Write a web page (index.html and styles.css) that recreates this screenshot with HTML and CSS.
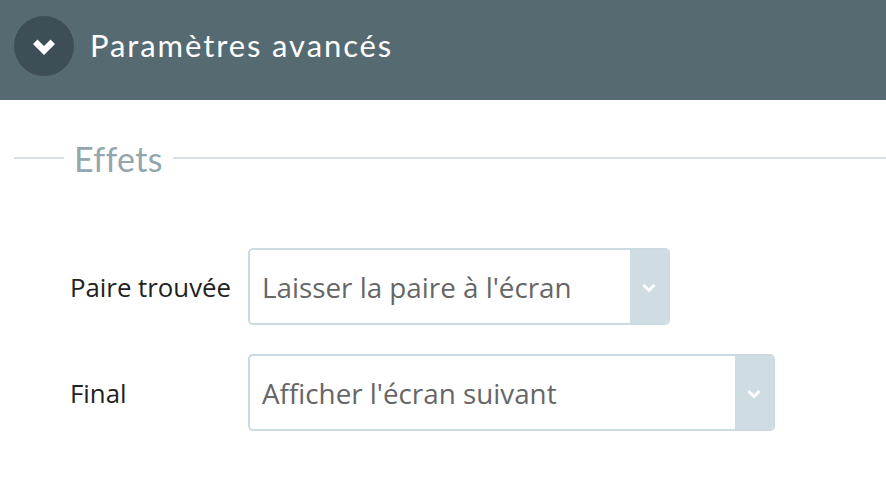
FILE: index.html
```html
<!DOCTYPE html>
<html lang="fr">
<head>
<meta charset="utf-8">
<link rel="stylesheet" href="styles.css">
</head>
<body>
<div class="header">
  <span class="toggle">
    <svg width="24" height="20" viewBox="0 0 24 20"><path d="M1 7 L5.5 2.5 L12 9 L18.5 2.5 L23 7 L12 18 Z" fill="#fff"/></svg>
  </span>
  <span class="title">Paramètres avancés</span>
</div>
<div class="section">
  <div class="legend"><span class="legend-text">Effets</span></div>
  <div class="rows">
    <div class="row">
      <label class="label">Paire trouvée</label>
      <div class="select select-short">
        <span class="value">Laisser la paire à l'écran</span>
        <span class="arrow"><svg class="chev" viewBox="0 0 14 10"><path d="M1.5 2 L7 7.5 L12.5 2" fill="none" stroke="#fff" stroke-width="3"/></svg></span>
      </div>
    </div>
    <div class="row">
      <label class="label">Final</label>
      <div class="select select-long">
        <span class="value">Afficher l'écran suivant</span>
        <span class="arrow"><svg class="chev" viewBox="0 0 14 10"><path d="M1.5 2 L7 7.5 L12.5 2" fill="none" stroke="#fff" stroke-width="3"/></svg></span>
      </div>
    </div>
  </div>
</div>
</body>
</html>
```
FILE: styles.css
```css
html, body {
  margin: 0;
  padding: 0;
  background: #fff;
  width: 886px;
  height: 496px;
  overflow: hidden;
}
.header {
  height: 100px;
  background: #566a71;
  display: flex;
  align-items: center;
  padding-left: 14px;
  box-sizing: border-box;
  padding-bottom: 8px;
}
.toggle {
  width: 60px;
  height: 60px;
  border-radius: 50%;
  background: #3e4e56;
  display: flex;
  align-items: center;
  justify-content: center;
}
.toggle svg { display: block; margin-top: 1px; }
.title {
  margin-left: 16px;
  margin-top: -3px;
  color: #fff;
  font-family: "Lato", "Liberation Sans", sans-serif;
  font-size: 31px;
  font-weight: 400;
  letter-spacing: 1.9px;
}
.section {
  padding-top: 40px;
}
.legend {
  display: flex;
  align-items: center;
  height: 36px;
}
.legend::before {
  content: "";
  margin-left: 14px;
  width: 50px;
  height: 2px;
  background: #d8e0e3;
}
.legend::after {
  content: "";
  flex: 1;
  height: 2px;
  background: #d8e0e3;
}
.legend-text {
  padding: 0 10px;
  color: #93a6ad;
  font-family: "Lato", "Liberation Sans", sans-serif;
  font-size: 34px;
  line-height: 36px;
  letter-spacing: 0.3px;
  margin-top: 2px;
}
.rows {
  padding-top: 72px;
  display: flex;
  flex-direction: column;
  gap: 29px;
}
.row {
  display: flex;
  align-items: center;
}
.label {
  width: 178px;
  padding-left: 70px;
  color: #222;
  font-family: "Open Sans", "Liberation Sans", sans-serif;
  font-size: 25.8px;
}
.select {
  height: 77px;
  box-sizing: border-box;
  border: 2px solid #ccdbe1;
  border-radius: 5px;
  display: flex;
  align-items: stretch;
  overflow: hidden;
}
.select-short { width: 422px; }
.select-long { width: 527px; }
.value {
  flex: 1;
  display: flex;
  align-items: center;
  padding-left: 12px;
  color: #666;
  font-family: "Open Sans", "Liberation Sans", sans-serif;
  font-size: 27.8px;
}
.arrow {
  width: 38px;
  flex: none;
  background: #cfdde3;
  display: flex;
  align-items: center;
  justify-content: center;
}
.chev { display: block; width: 14px; height: 10px; flex: none; margin-top: 2px; }
```
